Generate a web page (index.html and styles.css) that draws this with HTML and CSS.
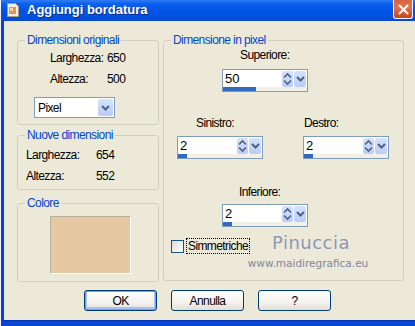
FILE: index.html
```html
<!DOCTYPE html>
<html lang="it">
<head>
  <meta charset="utf-8">
  <title>Aggiungi bordatura</title>
  <link rel="stylesheet" href="styles.css">
</head>
<body>
<div class="window">
  <div class="titlebar">
    <div class="title">
      <svg class="app-icon" width="12" height="14" viewBox="0 0 12 14">
        <path d="M0.5 0.5h8l3 3v10h-11z" fill="#f4efe4" stroke="#a59c8a"/>
        <rect x="2" y="4" width="7" height="7" fill="#e8925a"/>
        <rect x="3" y="5" width="3" height="3" fill="#f7d2a8"/>
      </svg>
      <span>Aggiungi bordatura</span>
    </div>
    <div class="close-btn">
      <svg width="11" height="11" viewBox="0 0 11 11">
        <path d="M1.5 1.5l8 8M9.5 1.5l-8 8" stroke="#fff" stroke-width="2" stroke-linecap="round"/>
      </svg>
    </div>
  </div>

  <div class="client">
    <div class="columns">
      <div class="col-left">
        <fieldset class="group group-orig">
          <legend>Dimensioni originali</legend>
          <div class="info-grid orig-grid">
            <span>Larghezza:</span><span>650</span>
            <span>Altezza:</span><span>500</span>
          </div>
          <div class="select">
            <span class="select-value">Pixel</span>
            <span class="drop-btn">
              <svg width="9" height="6" viewBox="0 0 9 6"><path d="M1 1l3.5 3.5L8 1" fill="none" stroke="#4d6185" stroke-width="2"/></svg>
            </span>
          </div>
        </fieldset>

        <fieldset class="group group-new">
          <legend>Nuove dimensioni</legend>
          <div class="info-grid new-grid">
            <span>Larghezza:</span><span>654</span>
            <span>Altezza:</span><span>552</span>
          </div>
        </fieldset>

        <fieldset class="group group-color">
          <legend>Colore</legend>
          <div class="swatch"></div>
        </fieldset>
      </div>

      <fieldset class="group group-pixel">
        <legend>Dimensione in pixel</legend>

        <div class="field field-top">
          <div class="field-label">Superiore:</div>
          <div class="spin">
            <div class="spin-top">
              <span class="spin-value">50</span>
              <span class="spin-arrows">
                <svg width="9" height="14" viewBox="0 0 9 14"><path d="M1 5.5l3.5-3.5L8 5.5M1 8.5l3.5 3.5L8 8.5" fill="none" stroke="#4d6185" stroke-width="1.6"/></svg>
              </span>
              <span class="spin-drop">
                <svg width="9" height="6" viewBox="0 0 9 6"><path d="M1 1l3.5 3.5L8 1" fill="none" stroke="#4d6185" stroke-width="2"/></svg>
              </span>
            </div>
            <div class="spin-track"><div class="spin-fill" style="width: 33px"></div></div>
          </div>
        </div>

        <div class="field-row">
          <div class="field field-left">
            <div class="field-label">Sinistro:</div>
            <div class="spin">
              <div class="spin-top">
                <span class="spin-value">2</span>
                <span class="spin-arrows">
                  <svg width="9" height="14" viewBox="0 0 9 14"><path d="M1 5.5l3.5-3.5L8 5.5M1 8.5l3.5 3.5L8 8.5" fill="none" stroke="#4d6185" stroke-width="1.6"/></svg>
                </span>
                <span class="spin-drop">
                  <svg width="9" height="6" viewBox="0 0 9 6"><path d="M1 1l3.5 3.5L8 1" fill="none" stroke="#4d6185" stroke-width="2"/></svg>
                </span>
              </div>
              <div class="spin-track"><div class="spin-fill" style="width: 9px"></div></div>
            </div>
          </div>
          <div class="field field-right">
            <div class="field-label">Destro:</div>
            <div class="spin">
              <div class="spin-top">
                <span class="spin-value">2</span>
                <span class="spin-arrows">
                  <svg width="9" height="14" viewBox="0 0 9 14"><path d="M1 5.5l3.5-3.5L8 5.5M1 8.5l3.5 3.5L8 8.5" fill="none" stroke="#4d6185" stroke-width="1.6"/></svg>
                </span>
                <span class="spin-drop">
                  <svg width="9" height="6" viewBox="0 0 9 6"><path d="M1 1l3.5 3.5L8 1" fill="none" stroke="#4d6185" stroke-width="2"/></svg>
                </span>
              </div>
              <div class="spin-track"><div class="spin-fill" style="width: 9px"></div></div>
            </div>
          </div>
        </div>

        <div class="field field-bottom">
          <div class="field-label">Inferiore:</div>
          <div class="spin">
            <div class="spin-top">
              <span class="spin-value">2</span>
              <span class="spin-arrows">
                <svg width="9" height="14" viewBox="0 0 9 14"><path d="M1 5.5l3.5-3.5L8 5.5M1 8.5l3.5 3.5L8 8.5" fill="none" stroke="#4d6185" stroke-width="1.6"/></svg>
              </span>
              <span class="spin-drop">
                <svg width="9" height="6" viewBox="0 0 9 6"><path d="M1 1l3.5 3.5L8 1" fill="none" stroke="#4d6185" stroke-width="2"/></svg>
              </span>
            </div>
            <div class="spin-track"><div class="spin-fill" style="width: 9px"></div></div>
          </div>
        </div>

        <div class="check-row">
          <span class="checkbox"></span>
          <span class="check-label">Simmetriche</span>
        </div>
      </fieldset>
    </div>

    <div class="buttons">
      <button class="btn btn-default">OK</button>
      <button class="btn">Annulla</button>
      <button class="btn">?</button>
    </div>
  </div>

  <div class="watermark">
    <div class="wm-name">Pinuccia</div>
    <div class="wm-site">www.maidiregrafica.eu</div>
  </div>
</div>
</body>
</html>
```

FILE: styles.css
```css
body {
  margin: 0;
  background-color: #f2f2f2;
  font-family: "Liberation Sans", Arial, sans-serif;
  font-size: 12px;
  letter-spacing: -0.6px;
  color: #000;
}

.window {
  position: relative;
  margin-left: 1px;
  width: 414px;
  height: 326px;
  display: flex;
  flex-direction: column;
  overflow: hidden;
}

/* title bar */
.titlebar {
  height: 21px;
  flex: none;
  display: flex;
  align-items: flex-start;
  justify-content: space-between;
  background: linear-gradient(#2f7cf4 0, #0a5fec 4px, #0055e5 10px, #0052e0 16px, #0a47cf 21px);
}

.title {
  display: flex;
  align-items: center;
  gap: 8px;
  padding: 2px 0 0 6px;
  color: #fff;
  font-weight: bold;
  font-size: 13px;
  line-height: 16px;
  letter-spacing: 0;
  text-shadow: 1px 1px 0 #0a2a8a;
}

.app-icon {
  display: block;
}

.close-btn {
  width: 20px;
  height: 19px;
  box-sizing: border-box;
  margin-right: 2px;
  border: 1px solid #fff;
  border-top: none;
  border-radius: 0 0 3px 3px;
  background: linear-gradient(#d9623f, #e27450 40%, #c8431f);
  display: flex;
  align-items: center;
  justify-content: center;
}

/* dialog body */
.client {
  flex: 1;
  background-color: #ece9d8;
  border-left: 3px solid #0842d6;
  border-bottom: 5px solid #0846d8;
  box-shadow: inset 0 -1px 0 #0733b8;
  padding: 12px 0 0 13px;
}

.columns {
  display: grid;
  grid-template-columns: 142px 241px;
  column-gap: 4px;
  align-items: start;
}

.group {
  margin: 0;
  padding: 0;
  border: 1px solid #d0d0bf;
  border-radius: 3px;
  box-sizing: border-box;
  min-width: 0;
}

.group legend {
  margin-left: 7px;
  padding: 0 2px;
  color: #0046d5;
  line-height: 14px;
}

.group-orig {
  height: 92px;
}

.group-new {
  height: 62px;
  margin-top: 3px;
}

.group-color {
  height: 86px;
  margin-top: 6px;
}

.group-pixel {
  height: 248px;
}

.info-grid {
  display: grid;
  row-gap: 7px;
  line-height: 14px;
}

.orig-grid {
  grid-template-columns: 57px auto;
  margin: 4px 0 0 32px;
}

.new-grid {
  grid-template-columns: 70px auto;
  margin: 6px 0 0 8px;
}

/* combo box */
.select {
  margin: 11px 0 0 16px;
  width: 81px;
  height: 21px;
  box-sizing: border-box;
  border: 1px solid #7f9db9;
  background: #fff;
  display: flex;
  align-items: center;
  justify-content: space-between;
}

.select-value {
  padding-left: 3px;
}

.drop-btn,
.spin-drop {
  width: 15px;
  height: 17px;
  margin-right: 1px;
  border-radius: 2px;
  background: linear-gradient(#d6e2fd, #b9cdf9);
  display: flex;
  align-items: center;
  justify-content: center;
}

.swatch {
  margin: 6px 0 0 32px;
  width: 81px;
  height: 58px;
  box-sizing: border-box;
  background: #e5c9a2;
  border: 1px solid #fff;
  border-top-color: #b8ae9c;
  border-left-color: #b8ae9c;
}

/* spin boxes */
.field-label {
  line-height: 14px;
}

.field-top {
  margin: 1px 0 0 58px;
}

.field-top .field-label {
  padding-left: 18px;
  margin-bottom: 7px;
}

.field-row {
  display: flex;
  gap: 40px;
  margin: 24px 0 0 13px;
}

.field-left .field-label {
  padding-left: 19px;
  margin-bottom: 6px;
}

.field-right .field-label {
  padding-left: 1px;
  margin-bottom: 6px;
}

.field-bottom {
  margin: 26px 0 0 58px;
}

.field-bottom .field-label {
  padding-left: 17px;
  margin-bottom: 5px;
}

.spin {
  width: 86px;
  height: 23px;
  box-sizing: border-box;
  border: 1px solid #7f9db9;
  background: #fff;
}

.spin-top {
  height: 17px;
  display: flex;
  align-items: center;
}

.spin-value {
  flex: 1;
  padding-left: 2px;
  font-size: 13px;
  letter-spacing: 0;
}

.spin-arrows {
  width: 11px;
  height: 16px;
  margin-right: 1px;
  border-radius: 2px;
  background: linear-gradient(#d6e2fd, #b9cdf9);
  display: flex;
  align-items: center;
  justify-content: center;
}

.spin-drop {
  width: 12px;
  height: 16px;
}

.spin-track {
  height: 4px;
  background: #f1efe6;
}

.spin-fill {
  height: 100%;
  background: #316ac5;
}

/* checkbox */
.check-row {
  display: flex;
  align-items: center;
  gap: 2px;
  margin: 11px 0 0 7px;
}

.checkbox {
  width: 13px;
  height: 13px;
  box-sizing: border-box;
  border: 1px solid #1c5180;
  background: linear-gradient(135deg, #dcdcd7, #fff);
}

.check-label {
  border: 1px dotted #000;
  line-height: 14px;
  padding: 0 1px;
}

/* buttons */
.buttons {
  display: flex;
  gap: 14px;
  margin: 8px 0 0 67px;
}

.btn {
  width: 73px;
  height: 21px;
  padding: 0;
  border: 1px solid #003c74;
  border-radius: 3px;
  background: linear-gradient(#fff, #f3f2ee 60%, #e2ded3);
  font-family: inherit;
  font-size: 12px;
  letter-spacing: -0.6px;
  color: #000;
}

.btn-default {
  box-shadow: inset 0 0 0 1px #7ca0e8, inset 0 -1px 0 2px #a9c0f0;
}

/* watermark over the dialog */
.watermark {
  position: absolute;
  left: 246px;
  top: 233px;
  width: 122px;
  color: #8d96b0;
  text-align: center;
  font-family: "DejaVu Sans", sans-serif;
  letter-spacing: 0;
}

.wm-name {
  font-size: 18px;
  line-height: 20px;
  letter-spacing: 0.5px;
  padding-left: 6px;
  text-shadow: 0 0 1px #f4f4f8;
}

.wm-site {
  margin-top: 4px;
  font-size: 10.5px;
  line-height: 13px;
  color: #8088a2;
}
```
